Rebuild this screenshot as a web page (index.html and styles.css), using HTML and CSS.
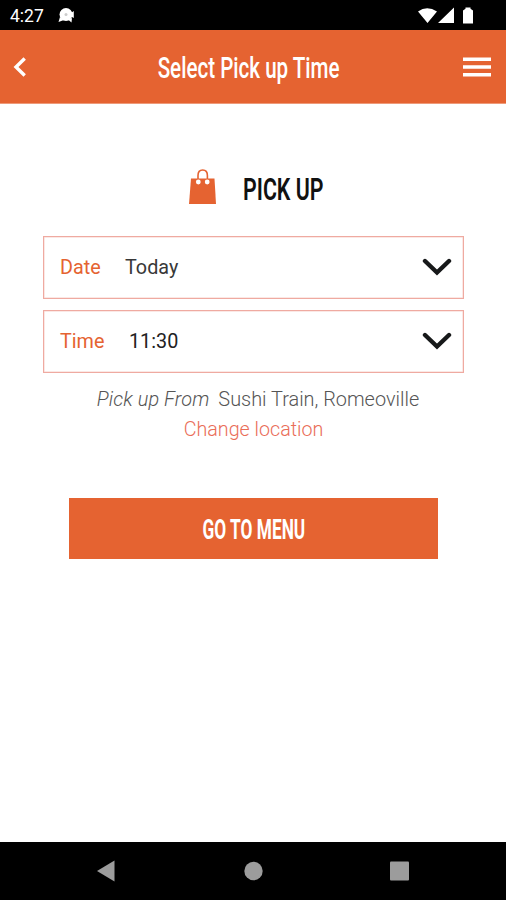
FILE: index.html
```html
<!DOCTYPE html>
<html lang="en">
<head>
<meta charset="utf-8">
<title>Select Pick up Time</title>
<link rel="stylesheet" href="styles.css">
</head>
<body>
<div class="status">
  <span class="clock">4:27</span>
  <svg class="notice" width="18" height="18" viewBox="0 0 18 18"><circle cx="9" cy="7.500" r="6.500" fill="#fff"/><path d="M3 10L1.500 15L7 13ZM14 6L16.800 4V11L14 9.500ZM11 12.500L15 11L14.500 15.500Z" fill="#fff"/><circle cx="9" cy="7.500" r="1.500" fill="#ccc"/></svg>
  <svg class="signals" width="58" height="18" viewBox="0 0 58 18"><path d="M1 4.500Q10 -2 20 4.500L10.500 16ZM21 16L37 .5V16Z" fill="#fff"/><path d="M46 3.500L48.500 1.800V.5H53.500V1.800L56 3.500V16.500H46Z" fill="#fff"/></svg>
</div>
<header class="bar">
  <svg class="back" width="14" height="22" viewBox="0 0 14 22"><path d="M12.700 2.500L4 11L12.700 19.500" fill="none" stroke="#fff" stroke-width="3.400"/></svg>
  <h1 class="title"><span class="narrow title-text">Select Pick up Time</span></h1>
  <svg class="burger" width="28" height="20" viewBox="0 0 28 20"><path d="M0 2.300H28M0 10H28M0 17.700H28" stroke="#fff" stroke-width="3.600"/></svg>
</header>
<main class="content">
  <div class="heading">
    <svg class="bag" width="28" height="36" viewBox="0 0 28 36"><path d="M2 9.500H25.500L27 35H0Z" fill="#e56331"/><path d="M9 12V6.500Q9 1 13.700 1T18.400 6.500V12" fill="none" stroke="#e56331" stroke-width="1.600"/><circle cx="9.300" cy="13" r="2.400" fill="#fff"/><circle cx="18.200" cy="13" r="2.400" fill="#fff"/></svg>
    <h2 class="pickup"><span class="narrow pickup-text">PICK UP</span></h2>
  </div>
  <div class="field">
    <span class="label">Date</span><span class="value">Today</span>
    <svg class="chevron" width="30" height="20" viewBox="0 0 30 20"><path d="M3 4L15 15.500L27 4" fill="none" stroke="#17191a" stroke-width="4.400" stroke-linecap="round"/></svg>
  </div>
  <div class="field">
    <span class="label time">Time</span><span class="value digits">11:30</span>
    <svg class="chevron" width="30" height="20" viewBox="0 0 30 20"><path d="M3 4L15 15.500L27 4" fill="none" stroke="#17191a" stroke-width="4.400" stroke-linecap="round"/></svg>
  </div>
  <p class="from"><em>Pick up From</em><span>Sushi Train, Romeoville</span></p>
  <a class="change">Change location</a>
  <button class="go"><span class="narrow go-text">GO TO MENU</span></button>
</main>
<nav class="system">
  <svg width="20" height="22" viewBox="0 0 20 22"><path d="M1 11L18.500 .5V21.500Z" fill="#9c9c9c"/></svg>
  <svg width="20" height="22" viewBox="0 0 20 22"><circle cx="10.500" cy="11" r="9.200" fill="#9c9c9c"/></svg>
  <svg width="20" height="22" viewBox="0 0 20 22"><rect x="0" y="1.500" width="19" height="19" rx="1" fill="#9c9c9c"/></svg>
</nav>
</body>
</html>
```

FILE: styles.css
```css
* { box-sizing: border-box; }
body {
  margin: 0;
  height: 900px;
  display: flex;
  flex-direction: column;
  background: #fff;
  font-family: Roboto, "Liberation Sans", sans-serif;
  overflow: hidden;
}
h1, h2, p { margin: 0; }
svg { display: block; flex: none; }
.narrow {
  display: inline-block;
  white-space: nowrap;
  transform-origin: center;
}
.status {
  height: 30px;
  background: #000;
  color: #fff;
  display: flex;
  align-items: center;
  padding: 1px 31px 0 10px;
}
.clock { font-size: 17.5px; width: 47px; }
.signals { margin-left: auto; }
.bar {
  height: 74px;
  background: #e56331;
  border-bottom: 1px solid #ee9a79;
  color: #fff;
  display: flex;
  align-items: center;
  justify-content: space-between;
  padding: 0 15px 0 12px;
}
.title {
  flex: 1;
  display: flex;
  justify-content: center;
  font-size: 29px;
  font-weight: 500;
}
.title-text { transform: translate(4.5px, 1px) scaleX(.71); }
.content {
  flex: 1;
  display: flex;
  flex-direction: column;
  align-items: center;
  padding-left: 1px;
}
.heading {
  width: 100%;
  height: 132px;
  padding: 65px 0 0 188px;
  display: flex;
}
.bag { margin-right: 25.5px; }
.pickup {
  font-size: 31px;
  line-height: 42px;
  font-weight: 600;
  color: #111;
}
.pickup-text { transform-origin: left; transform: scaleX(.69); }
.field {
  width: 421px;
  height: 63px;
  margin-bottom: 11px;
  border: 1.5px solid #efaaa1;
  box-shadow: inset 0 0 0 .5px #f8d2cc;
  display: flex;
  align-items: center;
  padding: 0 11px 1px 16px;
  font-size: 19.8px;
}
.label { width: 65px; color: #e56331; }
.label.time { width: 69px; }
.value { color: #383838; }
.digits { color: #222; }
.chevron { margin-left: auto; }
.from {
  display: flex;
  gap: 9px;
  margin-top: 1px;
  font-size: 19.9px;
  line-height: 30px;
  font-weight: 300;
  color: #555;
  white-space: nowrap;
  padding-left: 9px;
}
.from em { letter-spacing: .1px; }
.change {
  font-size: 19.7px;
  line-height: 30px;
  font-weight: 300;
  color: #ea6d58;
}
.go {
  width: 369px;
  height: 61px;
  margin-top: 53px;
  border: 0;
  padding: 0;
  background: #e56331;
  color: #fff;
  font: 700 27px Roboto, sans-serif;
}
.go-text { transform: translate(.7px, .5px) scaleX(.64); }
.system {
  height: 58px;
  background: #000;
  display: flex;
  align-items: center;
  justify-content: space-between;
  padding: 0 96px;
}
```
